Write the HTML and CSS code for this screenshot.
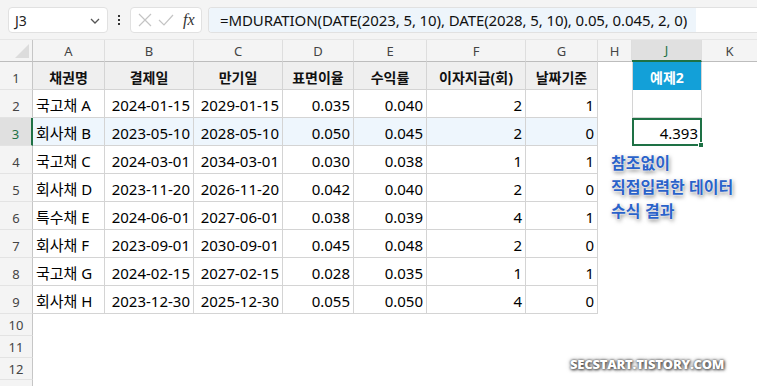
FILE: index.html
```html
<!DOCTYPE html>
<html lang="ko">
<head>
<meta charset="utf-8">
<link rel="stylesheet" href="styles.css">
</head>
<body>
<div class="topbar">
  <div class="namebox"><span>J3</span>
    <svg class="chev" width="12" height="8" viewBox="0 0 12 8"><path d="M2 2l4 4 4-4" fill="none" stroke="#555" stroke-width="1.3"/></svg>
  </div>
  <div class="dots"><i></i><i></i><i></i></div>
  <div class="fxbox">
    <svg width="16" height="16" viewBox="0 0 16 16"><path d="M2 2l12 12M14 2L2 14" stroke="#c4c4c4" stroke-width="1.2" fill="none"/></svg>
    <svg width="18" height="16" viewBox="0 0 18 16"><path d="M2 8l5 5L16 3" stroke="#c4c4c4" stroke-width="1.2" fill="none"/></svg>
    <span class="fx">fx</span>
  </div>
  <div class="formula"><span class="ftext">=MDURATION(DATE(2023, 5, 10), DATE(2028, 5, 10), 0.05, 0.045, 2, 0)</span></div>
</div>
<div class="sheet">
  <div class="corner"><span class="tri"></span></div>
  <div class="ch">A</div><div class="ch">B</div><div class="ch">C</div><div class="ch">D</div><div class="ch">E</div><div class="ch">F</div><div class="ch">G</div><div class="ch">H</div><div class="ch sel">J</div><div class="ch last">K</div>

  <div class="rh">1</div>
  <div class="c hd">채권명</div><div class="c hd">결제일</div><div class="c hd">만기일</div><div class="c hd">표면이율</div><div class="c hd">수익률</div><div class="c hd">이자지급(회)</div><div class="c hd">날짜기준</div><div class="e"></div><div class="c j1">예제2</div><div class="e"></div>

  <div class="rh">2</div>
  <div class="c">국고채 A</div><div class="c r">2024-01-15</div><div class="c r">2029-01-15</div><div class="c r">0.035</div><div class="c r">0.040</div><div class="c r">2</div><div class="c r">1</div><div class="e"></div><div class="c jb"></div><div class="e"></div>

  <div class="rh rsel">3</div>
  <div class="c hl">회사채 B</div><div class="c r hl">2023-05-10</div><div class="c r hl">2028-05-10</div><div class="c r hl">0.050</div><div class="c r hl">0.045</div><div class="c r hl">2</div><div class="c r hl">0</div><div class="e"></div><div class="c r active">4.393<span class="handle"></span></div><div class="e"></div>

  <div class="rh">4</div>
  <div class="c">국고채 C</div><div class="c r">2024-03-01</div><div class="c r">2034-03-01</div><div class="c r">0.030</div><div class="c r">0.038</div><div class="c r">1</div><div class="c r">1</div><div class="e"></div><div class="e"></div><div class="e"></div>

  <div class="rh">5</div>
  <div class="c">회사채 D</div><div class="c r">2023-11-20</div><div class="c r">2026-11-20</div><div class="c r">0.042</div><div class="c r">0.040</div><div class="c r">2</div><div class="c r">0</div><div class="e"></div><div class="e"></div><div class="e"></div>

  <div class="rh">6</div>
  <div class="c">특수채 E</div><div class="c r">2024-06-01</div><div class="c r">2027-06-01</div><div class="c r">0.038</div><div class="c r">0.039</div><div class="c r">4</div><div class="c r">1</div><div class="e"></div><div class="e"></div><div class="e"></div>

  <div class="rh">7</div>
  <div class="c">회사채 F</div><div class="c r">2023-09-01</div><div class="c r">2030-09-01</div><div class="c r">0.045</div><div class="c r">0.048</div><div class="c r">2</div><div class="c r">0</div><div class="e"></div><div class="e"></div><div class="e"></div>

  <div class="rh">8</div>
  <div class="c">국고채 G</div><div class="c r">2024-02-15</div><div class="c r">2027-02-15</div><div class="c r">0.028</div><div class="c r">0.035</div><div class="c r">1</div><div class="c r">1</div><div class="e"></div><div class="e"></div><div class="e"></div>

  <div class="rh">9</div>
  <div class="c">회사채 H</div><div class="c r">2023-12-30</div><div class="c r">2025-12-30</div><div class="c r">0.055</div><div class="c r">0.050</div><div class="c r">4</div><div class="c r">0</div><div class="e"></div><div class="e"></div><div class="e"></div>

  <div class="rh sm">10</div><div class="blank"></div>
  <div class="rh sm">11</div><div class="blank"></div>
  <div class="rh sm">12</div><div class="blank"></div>
  <div class="rh sm"></div><div class="blank"></div>

  <div class="note">참조없이<br>직접입력한 데이터<br>수식 결과</div>
  <div class="mark">SECSTART.TISTORY.COM</div>
</div>
</body>
</html>
```
FILE: styles.css
```css
* { box-sizing: border-box; }
html, body { margin: 0; padding: 0; }
body {
  width: 757px;
  height: 386px;
  overflow: hidden;
  background: #fff;
  font-family: "Noto Sans", "Noto Sans CJK KR", sans-serif;
  color: #000;
}
.topbar {
  height: 40px;
  background: #f4f4f4;
  border-bottom: 1px solid #e6e6e6;
  display: flex;
  align-items: flex-start;
  padding: 7px 0 0 8px;
}
.namebox {
  width: 100px;
  height: 26px;
  background: #fff;
  border: 1px solid #e1e1e1;
  border-radius: 4px;
  display: flex;
  align-items: center;
  justify-content: space-between;
  padding: 0 6px 0 6px;
  font-size: 14px;
  color: #222;
}
.chev { margin-top: 1px; }
.dots {
  width: 22px;
  height: 26px;
  display: flex;
  flex-direction: column;
  align-items: center;
  justify-content: center;
  gap: 2px;
}
.dots i { width: 2px; height: 2px; background: #333; display: block; }
.fxbox {
  width: 72px;
  height: 26px;
  background: #fff;
  border: 1px solid #e1e1e1;
  border-radius: 4px;
  display: flex;
  align-items: center;
  padding: 0 5px 0 6px;
  gap: 4px;
}
.fx {
  font-family: "Liberation Serif", "DejaVu Serif", serif;
  font-style: italic;
  font-size: 16px;
  color: #333;
  margin-left: 4px;
}
.formula {
  margin-left: 6px;
  flex: 1;
  height: 26px;
  background: #fff;
  border: 1px solid #e1e1e1;
  border-right: none;
  border-radius: 4px 0 0 4px;
  display: flex;
  align-items: stretch;
  overflow: hidden;
}
.ftext {
  background: #eef5fb;
  padding: 0 9px 0 11px;
  font-size: 15px;
  line-height: 24px;
  color: #111;
  white-space: nowrap;
  letter-spacing: -0.1px;
}
.sheet {
  position: relative;
  display: grid;
  grid-template-columns: 33px 72px 89px 89px 71px 73px 99px 72px 34px 70px 55px;
  grid-template-rows: 22px repeat(9, 28px) 22px 22px 22px 22px;
}
.corner {
  background: #f4f4f4;
  border-right: 1px solid #c6c6c6;
  border-bottom: 1px solid #bdbdbd;
  position: relative;
}
.tri {
  position: absolute;
  right: 3px;
  bottom: 3px;
  width: 0;
  height: 0;
  border-left: 14px solid transparent;
  border-bottom: 14px solid #dcdcdc;
}
.ch {
  background: #f4f4f4;
  border-right: 1px solid #dedede;
  border-bottom: 1px solid #bdbdbd;
  font-size: 13px;
  color: #444;
  display: flex;
  align-items: center;
  justify-content: center;
}
.ch.last { border-right: none; }
.ch.sel {
  background: #e0e0e0;
  border-bottom: 2px solid #1e7145;
  color: #1e7145;
}
.rh {
  background: #f4f4f4;
  border-right: 1px solid #c6c6c6;
  border-bottom: 1px solid #e3e3e3;
  font-size: 13px;
  color: #444;
  display: flex;
  align-items: flex-end;
  justify-content: center;
  padding-bottom: 2px;
}
.rh.sm { padding-bottom: 1px; }
.rh.rsel {
  background: #e0e0e0;
  border-right: 2px solid #1e7145;
  color: #1e7145;
}
.blank { grid-column: 2 / span 10; }
.c {
  border-right: 1px solid #d4d4d4;
  border-bottom: 1px solid #d4d4d4;
  font-size: 15px;
  padding: 2px 3px 0 3px;
  display: flex;
  align-items: center;
  white-space: nowrap;
}
.c.r { justify-content: flex-end; padding-right: 3px; }
.c.hd {
  background: #efefef;
  font-weight: 700;
  font-size: 14px;
  justify-content: center;
  color: #111;
}
.c.hl { background: #eef6fd; }
.c.j1 {
  background: #13a0d8;
  color: #fff;
  font-weight: 700;
  font-size: 14px;
  justify-content: center;
  border-left: 1px solid #d4d4d4;
  border-right: 1px solid #d4d4d4;
  border-bottom: none;
}
.c.jb { border-left: 1px solid #d4d4d4; }
.c.active {
  border: 2px solid #1e7145;
  position: relative;
  padding-right: 2px;
}
.handle {
  position: absolute;
  right: -4px;
  bottom: -4px;
  width: 6px;
  height: 6px;
  background: #1e7145;
  border: 1px solid #fff;
}
.note {
  position: absolute;
  left: 611px;
  top: 110px;
  font-size: 16px;
  font-weight: 700;
  line-height: 24px;
  color: #2a62c9;
  text-shadow: 0 0 2px #fff, 0 0 2px #fff, 1px 2px 4px rgba(0, 0, 0, 0.55);
  font-family: "Noto Sans CJK KR", sans-serif;
}
.mark {
  position: absolute;
  left: 570px;
  top: 315px;
  font-family: "Open Sans", "Noto Sans", sans-serif;
  font-size: 13px;
  font-weight: 800;
  color: #fff;
  letter-spacing: -0.2px;
  text-shadow: 0 0 2px #555, 1px 1px 3px #444, 0 0 4px #777;
}
```
